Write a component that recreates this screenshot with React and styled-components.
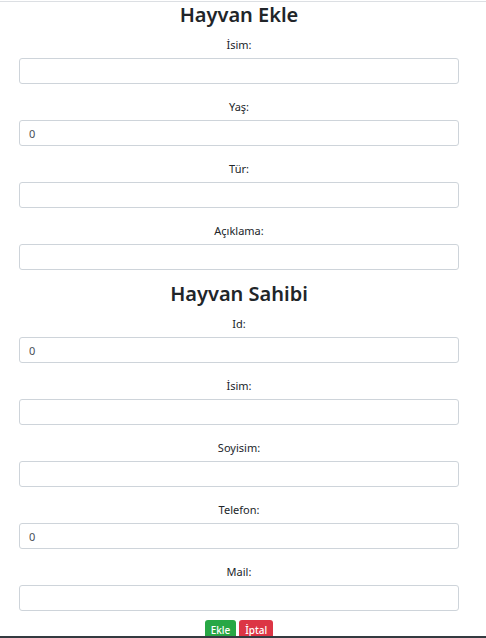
import styled, { createGlobalStyle } from "styled-components";

const GlobalStyle = createGlobalStyle`
  * {
    box-sizing: border-box;
  }
  body {
    margin: 0;
    background: #ffffff;
    font-family: "Noto Sans", "Open Sans", sans-serif;
    color: #212529;
  }
`;

const Frame = styled.div`
  margin-top: 1px;
  height: 637px;
  border-top: 1px solid #dcdfe3;
  border-bottom: 2px solid #343a40;
  overflow: hidden;
`;

const Form = styled.form`
  width: 440px;
  margin-left: 19px;
  display: flex;
  flex-direction: column;
  align-items: center;
`;

const Title = styled.h2`
  margin: 0 0 9px;
  font-size: 20px;
  line-height: 26px;
  font-weight: 600;
  color: #212529;
`;

const Field = styled.div`
  width: 100%;
  display: flex;
  flex-direction: column;
  align-items: center;
  gap: 5px;
  margin-bottom: ${(p) => p.$after};
`;

const Label = styled.label`
  font-size: 11px;
  line-height: 16px;
  color: #212529;
`;

const Input = styled.input`
  width: 100%;
  height: 26px;
  padding: 0 9px;
  border: 1px solid #ced4da;
  border-radius: 3px;
  font-family: inherit;
  font-size: 11px;
  color: #495057;
  background: #fff;
  outline: none;
`;

const Buttons = styled.div`
  display: flex;
  gap: 3px;
`;

const Button = styled.button`
  height: 22px;
  padding: 0 6px 2px;
  border: none;
  border-radius: 3px;
  font-family: inherit;
  font-size: 10px;
  font-weight: 500;
  color: #fff;
  background: ${(p) => (p.$variant === "danger" ? "#dc3545" : "#28a745")};
`;

const animalFields = [
  { label: "İsim:", value: "" },
  { label: "Yaş:", value: "0" },
  { label: "Tür:", value: "" },
  { label: "Açıklama:", value: "" },
];

const ownerFields = [
  { label: "Id:", value: "0" },
  { label: "İsim:", value: "" },
  { label: "Soyisim:", value: "" },
  { label: "Telefon:", value: "0" },
  { label: "Mail:", value: "" },
];

function FormGroup({ fields, lastGap }) {
  return fields.map((f, i) => (
    <Field key={i} $after={i === fields.length - 1 ? lastGap : "15px"}>
      <Label>{f.label}</Label>
      <Input defaultValue={f.value} />
    </Field>
  ));
}

export default function App() {
  return (
    <>
      <GlobalStyle />
      <Frame>
        <Form onSubmit={(e) => e.preventDefault()}>
          <Title>Hayvan Ekle</Title>
          <FormGroup fields={animalFields} lastGap="11px" />
          <Title>Hayvan Sahibi</Title>
          <FormGroup fields={ownerFields} lastGap="9px" />
          <Buttons>
            <Button type="submit">Ekle</Button>
            <Button type="button" $variant="danger">İptal</Button>
          </Buttons>
        </Form>
      </Frame>
    </>
  );
}
